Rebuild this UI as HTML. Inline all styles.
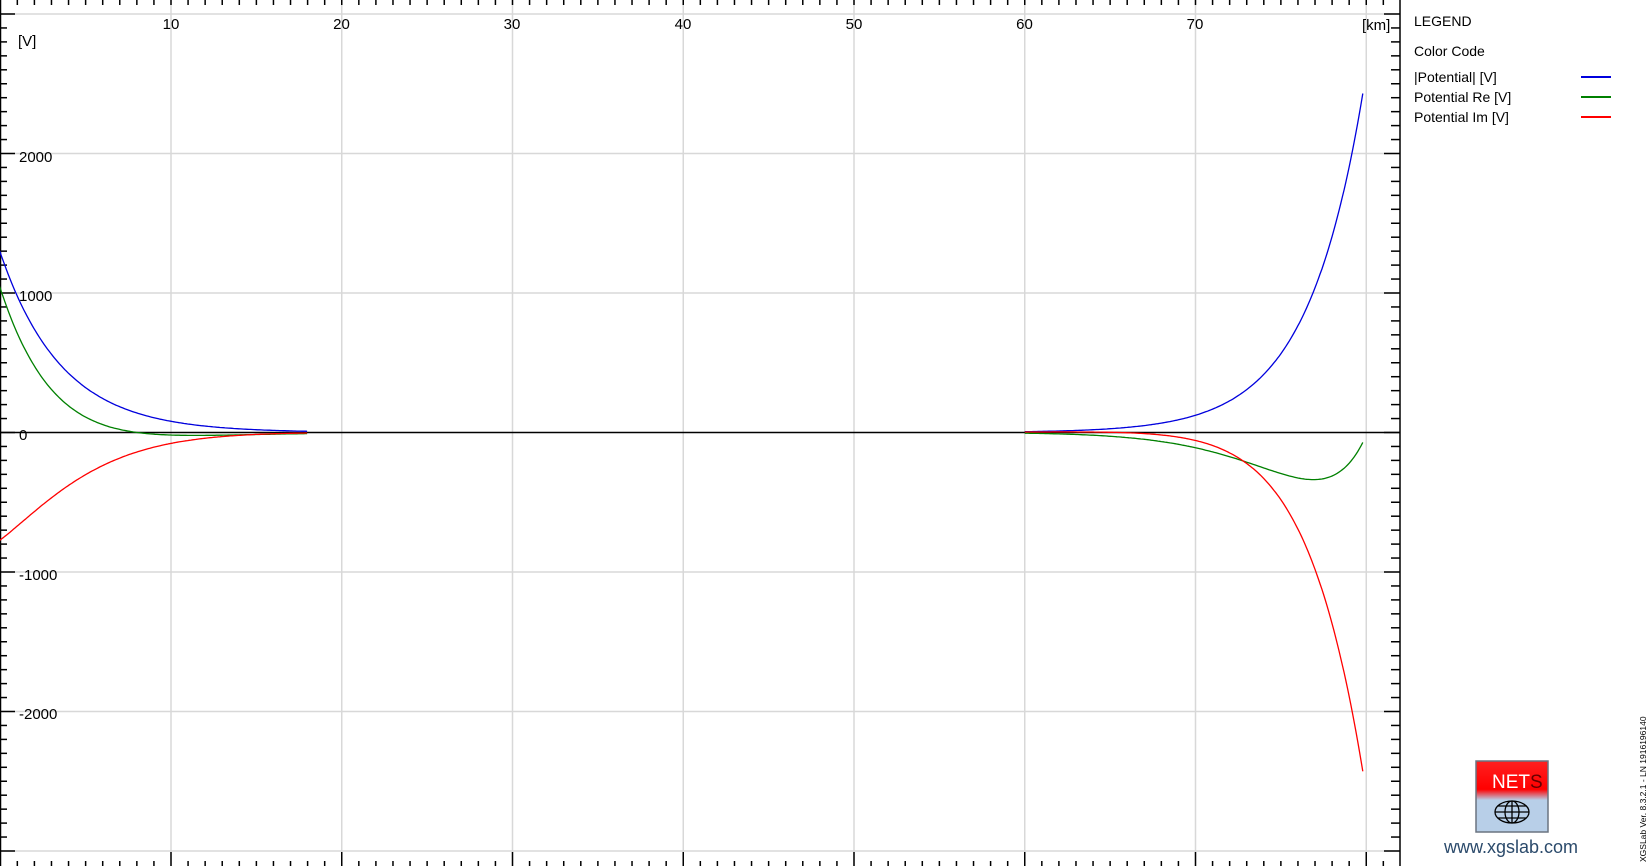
<!DOCTYPE html>
<html><head><meta charset="utf-8"><style>
html,body{margin:0;padding:0;background:#fff;width:1651px;height:866px;overflow:hidden;font-family:"Liberation Sans",Arial,sans-serif}
svg{position:absolute;left:0;top:0}
</style></head><body>
<svg id="s" width="1651" height="866" xmlns="http://www.w3.org/2000/svg" font-family="Liberation Sans, Arial, sans-serif">
<g id="grid" stroke="#d8d8d8" stroke-width="1.5"></g>
<g id="ticks" stroke="#000" stroke-width="1.5"></g>
<line x1="0" y1="432.5" x2="1400" y2="432.5" stroke="#000" stroke-width="1.5"/>
<line x1="1400" y1="0" x2="1400" y2="866" stroke="#000" stroke-width="1.5"/>
<line x1="0.5" y1="0" x2="0.5" y2="866" stroke="#000" stroke-width="1.5"/>
<path id="pb" fill="none" stroke="#0000dd" stroke-width="1.3"/>
<path id="pb2" fill="none" stroke="#0000dd" stroke-width="1.3"/>
<path id="pg" fill="none" stroke="#008000" stroke-width="1.3"/>
<path id="pg2" fill="none" stroke="#008000" stroke-width="1.3"/>
<path id="pr" fill="none" stroke="#ff0000" stroke-width="1.3"/>
<path id="pr2" fill="none" stroke="#ff0000" stroke-width="1.3"/>
<g font-size="15" fill="#000">
<text x="171" y="29" text-anchor="middle">10</text>
<text x="341.5" y="29" text-anchor="middle">20</text>
<text x="512" y="29" text-anchor="middle">30</text>
<text x="683" y="29" text-anchor="middle">40</text>
<text x="854" y="29" text-anchor="middle">50</text>
<text x="1024.5" y="29" text-anchor="middle">60</text>
<text x="1195" y="29" text-anchor="middle">70</text>
<text x="1362" y="30">[km]</text>
<text x="18" y="46">[V]</text>
<text x="19" y="162">2000</text>
<text x="19" y="301">1000</text>
<text x="19" y="440">0</text>
<text x="19" y="580">-1000</text>
<text x="19" y="719">-2000</text>
</g>
<g font-size="14" fill="#000">
<text x="1414" y="26">LEGEND</text>
<text x="1414" y="56">Color Code</text>
<text x="1414" y="82">|Potential| [V]</text>
<text x="1414" y="102">Potential Re [V]</text>
<text x="1414" y="122">Potential Im [V]</text>
</g>
<line x1="1581" y1="77" x2="1611" y2="77" stroke="#0000dd" stroke-width="2"/>
<line x1="1581" y1="97" x2="1611" y2="97" stroke="#008000" stroke-width="2"/>
<line x1="1581" y1="117" x2="1611" y2="117" stroke="#ff0000" stroke-width="2"/>
<defs><linearGradient id="lg" x1="0" y1="0" x2="0" y2="1">
<stop offset="0" stop-color="#ff2020"/><stop offset="0.4" stop-color="#ff0000"/><stop offset="0.55" stop-color="#b8cfe8"/><stop offset="1" stop-color="#b8cfe8"/></linearGradient></defs>
<rect x="1476" y="761" width="72" height="71" fill="url(#lg)" stroke="#6a7480" stroke-width="1.5"/>
<text x="1492" y="788" font-size="19" fill="#fff">NET<tspan fill="#600">S</tspan></text>
<g fill="none" stroke="#000" stroke-width="1.3">
<ellipse cx="1512" cy="812" rx="17" ry="11"/>
<ellipse cx="1512" cy="812" rx="7" ry="11"/>
<line x1="1512" y1="801" x2="1512" y2="823"/>
<line x1="1495" y1="812" x2="1529" y2="812"/>
<line x1="1498" y1="806" x2="1526" y2="806"/>
<line x1="1498" y1="818" x2="1526" y2="818"/>
</g>
<text x="1511" y="853" font-size="18" fill="#2b4a6b" text-anchor="middle">www.xgslab.com</text>
<text transform="translate(1646,862) rotate(-90)" font-size="8.5" fill="#000">XGSLab Ver. 8.3.2.1 - LN 1916196140</text>
</svg>
<script>
var NS="http://www.w3.org/2000/svg";
function L(g,x1,y1,x2,y2){var l=document.createElementNS(NS,"line");l.setAttribute("x1",x1);l.setAttribute("y1",y1);l.setAttribute("x2",x2);l.setAttribute("y2",y2);document.getElementById(g).appendChild(l);}
function X(km){return 171+(km-10)*17.075;}
var gy=[14,153.5,293,432.5,572,711.5,851];
for(var k=10;k<=80;k+=10)L("grid",X(k),0,X(k),866);
gy.forEach(function(y){if(y!=432.5)L("grid",0,y,1400,y);});
for(var k=0;k<=81;k++){var x=X(k);if(x<1||x>1399)continue;var maj=k%10==0;L("ticks",x,0,x,5);L("ticks",x,866,x,maj?852:861);}
for(var i=-31;i<=31;i++){var y=432.5+i*13.95;if(y<2||y>864)continue;var maj=i%10==0;L("ticks",0,y,maj?15:7,y);L("ticks",1400,y,maj?1384:1391,y);}
function Y(v){return 432.5-v*0.1395;}
var b="",g="",r="";
for(var km=-0.03;km<=18;km+=0.1){var M=1290*Math.exp(-km/3.6),t=0.64+0.116*km;var x=X(km).toFixed(1);
b+=(b?"L":"M")+x+","+Y(M).toFixed(1);g+=(g?"L":"M")+x+","+Y(M*Math.cos(t)).toFixed(1);r+=(r?"L":"M")+x+","+Y(-M*Math.sin(t)).toFixed(1);}
document.getElementById("pb").setAttribute("d",b);document.getElementById("pg").setAttribute("d",g);document.getElementById("pr").setAttribute("d",r);
b="";g="";r="";
var E=79.8;
for(var km=60;km<=E+0.01;km+=0.1){var M=2430*Math.exp((km-E)/3.29),t=1.6+(E-km)*0.108;var x=X(km).toFixed(1);
b+=(b?"L":"M")+x+","+Y(M).toFixed(1);g+=(g?"L":"M")+x+","+Y(M*Math.cos(t)).toFixed(1);r+=(r?"L":"M")+x+","+Y(-M*Math.sin(t)).toFixed(1);}
document.getElementById("pb2").setAttribute("d",b);document.getElementById("pg2").setAttribute("d",g);document.getElementById("pr2").setAttribute("d",r);
</script>
</body></html>
